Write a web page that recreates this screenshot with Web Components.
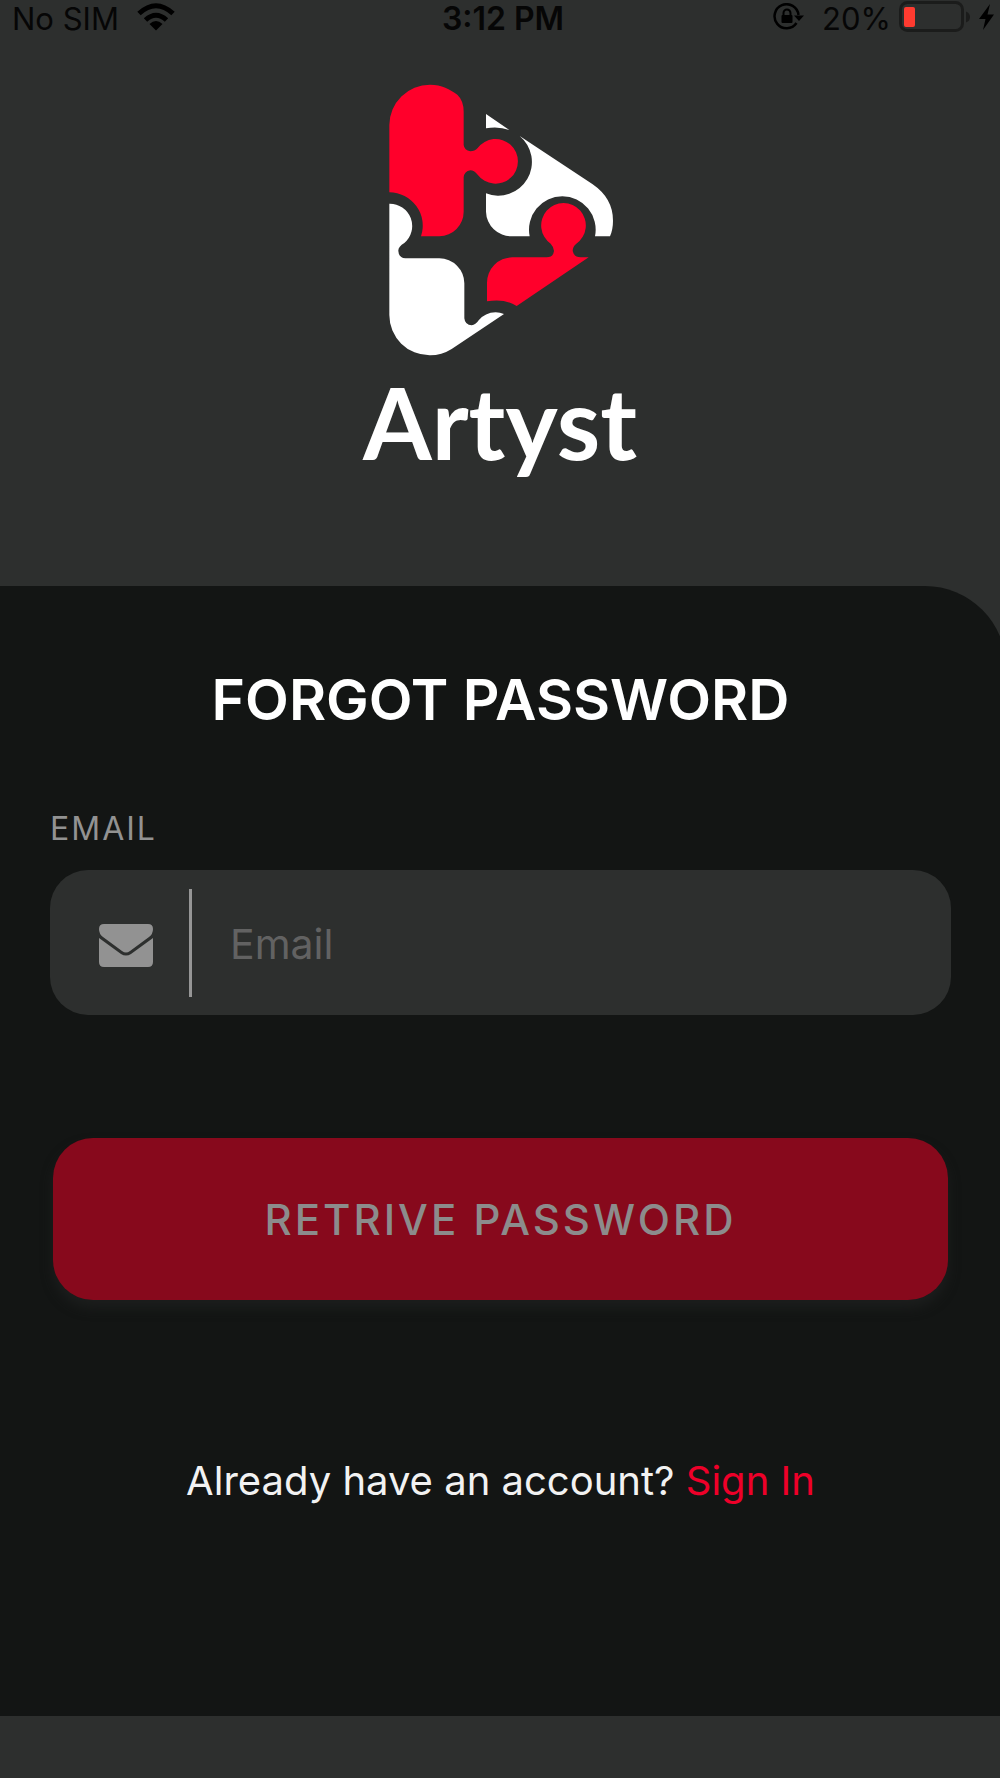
<!DOCTYPE html>
<html lang="en">
<head>
<meta charset="utf-8">
<meta name="viewport" content="width=device-width, initial-scale=1">
<title>Artyst - Forgot password</title>
<style>
html, body { margin: 0; min-height: 100%; background: #2d2f2e; }
body { font-family: Inter, "Liberation Sans", sans-serif; }
</style>
</head>
<body>
<artyst-screen></artyst-screen>
<script>
function define(name, html) {
  const template = document.createElement('template');
  template.innerHTML = html;
  customElements.define(name, class extends HTMLElement {
    constructor() {
      super();
      this.attachShadow({ mode: 'open' }).append(template.content.cloneNode(true));
    }
  });
}

define('status-bar', `
<style>
:host { display: grid; grid-template-columns: 1fr auto 1fr; align-items: center; height: 38px; padding: 0 6px 0 12px; color: #060606; font-size: 31px; line-height: 38px; }
.side { display: flex; align-items: center; gap: 18px; white-space: nowrap; }
.end { justify-content: flex-end; gap: 8px; }
.time { font-weight: 600; font-size: 32px; line-height: 38px; }
.lock { margin-right: 10px; }
svg { display: block; flex: none; margin-bottom: 4px; }
</style>
<div class="side"><span>No SIM</span>
<svg width="38" height="28" viewBox="0 0 38 28" aria-hidden="true"><g fill="none" stroke="#000" stroke-width="5"><path d="M2 10.500Q19-5 36 10.500M8.500 17Q19 7.500 29.500 17"/></g><path d="M12.500 21Q19 15 25.500 21L19 27.500Z"/></svg></div>
<span class="time">3:12 PM</span>
<div class="side end">
<svg class="lock" width="31" height="28" viewBox="0 0 31 28" aria-hidden="true"><path d="M23.500 20A12 12 0 1 1 25.500 12" fill="none" stroke="#000" stroke-width="2.500"/><path d="M21 12.500H31L26 18Z"/><rect x="8.500" y="12" width="11" height="8" rx="1"/><path d="M10.500 13V10a3.500 3.500 0 0 1 7 0V13" fill="none" stroke="#000" stroke-width="2"/></svg>
<span>20%</span>
<svg width="72" height="32" viewBox="0 0 72 32" aria-hidden="true"><rect x="1.500" y="1.500" width="62" height="28" rx="7" fill="none" stroke="#1b1c1b" stroke-width="3"/><rect x="5" y="6" width="11" height="20" rx="2" fill="#ff3b30"/><path d="M67 10.500Q71 12 71 16T67 21.500Z" fill="#1b1c1b"/></svg>
<svg width="15" height="26" viewBox="0 0 15 26" aria-hidden="true"><path d="M11 0L0 15H6.500L4 26L15 10.500H8.500Z"/></svg>
</div>`);

define('artyst-logo', `
<style>
:host { display: flex; flex-direction: column; align-items: center; color: #fff; }
svg { display: block; }
.word { font-family: Lato, sans-serif; font-size: 99px; line-height: 104px; font-weight: 700; }
</style>
<svg width="260" height="300" viewBox="0 0 780 900" aria-hidden="true">
<g fill="#ff002b">
<path d="M58 165A122 122 0 0 1 180 44C215 44 240 58 262 74Q281 92 281 125V225Q283 241 301 244Q314 244 323 234A67 67 0 1 1 323 314Q312 301 301 301Q283 304 281 322V425A74 74 0 0 1 208 499H153A100 100 0 0 0 58 367Z"/>
<path d="M440 708Q405 685 351 694V640A76 76 0 0 1 427 562H530Q550 562 552 543Q551 530 542 521A67 67 0 1 1 619 521Q608 530 608 543Q612 562 632 562H656Z"/>
</g>
<g fill="#fff">
<path d="M58 401A67 67 0 0 1 103 519Q84 530 85 543Q86 563 106 565H208A75 75 0 0 1 283 640V745Q285 765 305 766Q317 765 326 751Q345 728 377 727Q390 727 402 732L245 837Q215 856 180 856A121 121 0 0 1 58 735Z"/>
<path d="M348 132L418 180Q385 168 348 175Z"/>
<path d="M449 198L668 343Q729 385 729 452Q729 478 720 499H675A100 100 0 1 0 479 499H425A76 76 0 0 1 348 425V370A101 101 0 0 0 449 198Z"/>
</g></svg>
<div class="word">Artyst</div>`);

define('email-field', `
<style>
:host { display: block; }
label { display: block; color: #929292; font-size: 32px; line-height: 40px; letter-spacing: 2px; }
.box { display: flex; align-items: center; height: 145px; margin-top: 21px; border-radius: 38px; background: #2d2f2e; }
svg { flex: none; margin: 6px 36px 0 49px; }
input { flex: 1; min-width: 0; height: 108px; box-sizing: border-box; padding: 2px 38px 0; border: 0; border-left: 3px solid #969696; border-radius: 0; background: none; color: #ddd; font: 41px Inter, sans-serif; outline: none; }
input::placeholder { color: #626262; opacity: 1; }
</style>
<label for="email">EMAIL</label>
<div class="box">
<svg width="54" height="43" viewBox="0 0 54 43" fill="#929292" aria-hidden="true"><path d="M5 0H49Q54 0 54 5Q54 10 50 13L31 27Q27 30 23 27L4 13Q0 10 0 5Q0 0 5 0Z"/><path d="M0 14L22 30Q27 33 32 30L54 14V38Q54 43 49 43H5Q0 43 0 38Z"/></svg>
<input id="email" type="email" placeholder="Email">
</div>`);

define('primary-button', `
<style>
:host { display: block; }
button { display: block; width: 100%; height: 162px; padding: 0; border: 0; border-radius: 40px; background: #87091c; color: #8c8c8c; font: 500 42px Inter, sans-serif; letter-spacing: 3px; box-shadow: 0 8px 12px #1c1e1d; }
</style>
<button type="submit"><slot></slot></button>`);

define('artyst-screen', `
<style>
:host { display: flex; flex-direction: column; min-height: 100vh; overflow: hidden; background: #2d2f2e; }
artyst-logo { margin-top: 32px; }
main { margin: 112px -6px 62px 0; padding: 82px 55px 0 50px; flex: 1; box-sizing: border-box; border-top-right-radius: 81px; background: #131514; }
h1 { margin: 0; color: #fff; font-size: 57px; line-height: 64px; font-weight: 600; text-align: center; }
form { margin: 0; }
email-field { margin-top: 77px; }
primary-button { margin: 123px 3px 0; }
p { margin: 157px 0 0; color: #f2f2f2; font-size: 40px; line-height: 48px; text-align: center; }
a { color: #ee0029; text-decoration: none; }
</style>
<status-bar></status-bar>
<artyst-logo></artyst-logo>
<main>
<h1>FORGOT PASSWORD</h1>
<form><email-field></email-field><primary-button>RETRIVE PASSWORD</primary-button></form>
<p>Already have an account? <a href="#sign-in">Sign In</a></p>
</main>`);
</script>
</body>
</html>
